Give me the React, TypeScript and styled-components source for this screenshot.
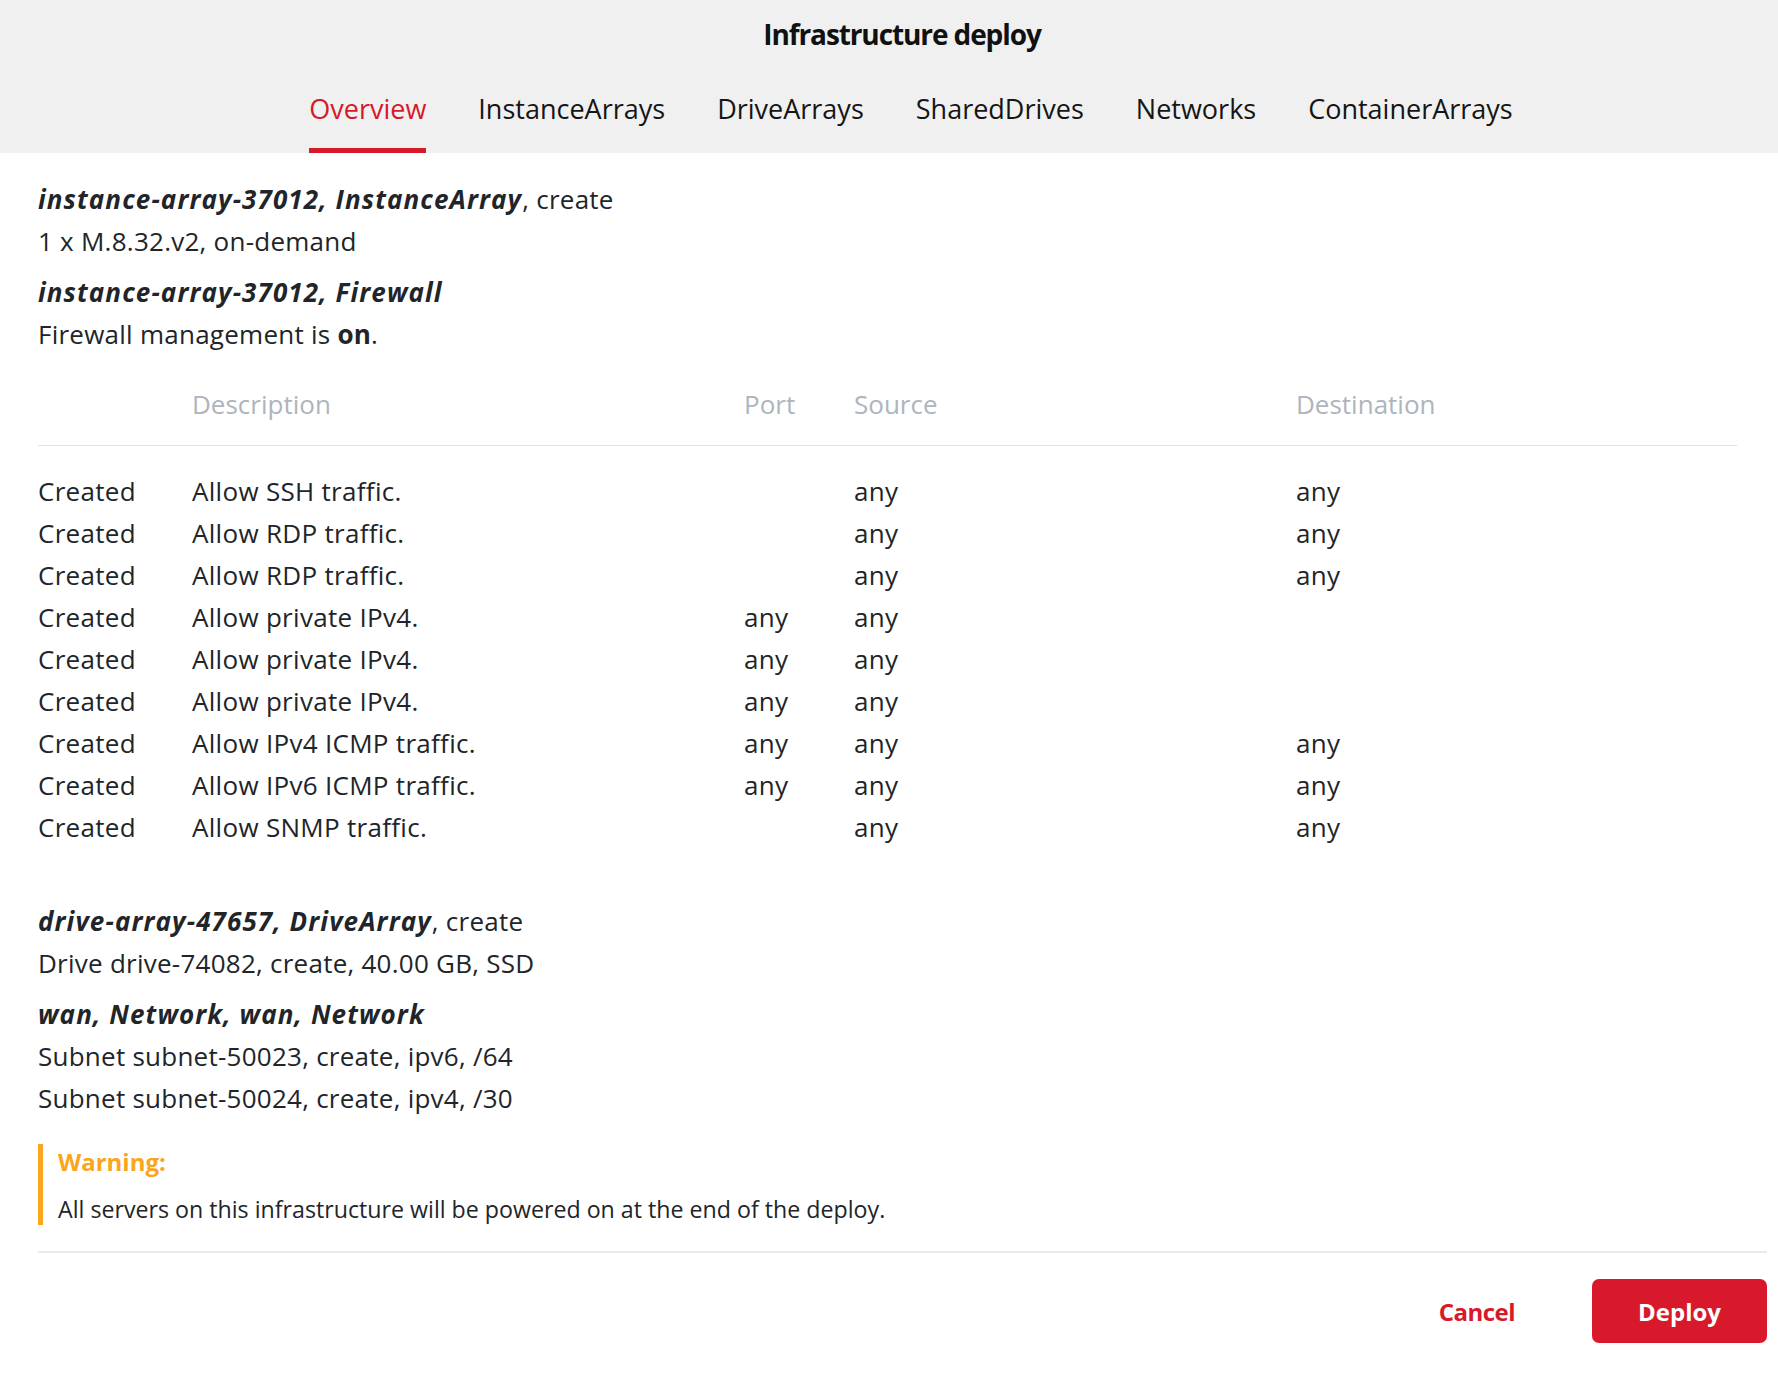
import React from "react";
import styled, { createGlobalStyle } from "styled-components";

const GlobalStyle = createGlobalStyle`
  html, body { margin: 0; padding: 0; background: #ffffff; }
  body { font-family: "Open Sans", "Noto Sans", sans-serif; color: #212529; }
  * { box-sizing: border-box; }
`;

const Modal = styled.div`
  width: 1778px;
  min-height: 1390px;
  background: #ffffff;
  display: flex;
  flex-direction: column;
`;

const Header = styled.header`
  background: #f0f0f0;
  padding: 15px 12px 0 38px;
  display: flex;
  flex-direction: column;
  align-items: center;
`;

const Title = styled.h1`
  margin: 0;
  font-size: 28px;
  line-height: 38px;
  font-weight: 700;
  letter-spacing: -1.1px;
  color: #111111;
`;

const Tabs = styled.nav`
  margin-top: 37px;
  padding-left: 18px;
  display: flex;
  gap: 52px;
`;

const Tab = styled.span<{ $active?: boolean }>`
  font-size: 27px;
  line-height: 38px;
  padding-bottom: 20px;
  color: ${(p) => (p.$active ? "#d51a2a" : "#151515")};
  border-bottom: 5px solid ${(p) => (p.$active ? "#d51a2a" : "transparent")};
  cursor: pointer;
`;

const Body = styled.main`
  padding: 25px 11px 0 38px;
  display: flex;
  flex-direction: column;
`;

const Section = styled.section<{ $top?: number }>`
  margin-top: ${(p) => p.$top ?? 0}px;
`;

const Line = styled.div<{ $gap?: number }>`
  font-size: 26px;
  line-height: 42px;
  letter-spacing: 0.25px;
  margin-top: ${(p) => p.$gap ?? 0}px;
  white-space: nowrap;
`;

const Strong = styled.b`
  font-weight: 700;
  font-style: italic;
  letter-spacing: 1.1px;
`;

const Bold = styled.b`
  font-weight: 700;
`;

const Table = styled.div`
  margin-top: 28px;
  margin-right: 30px;
  display: grid;
  grid-template-columns: 154px 552px 110px 442px 1fr;
  font-size: 26px;
  line-height: 42px;
  letter-spacing: 0.3px;
`;

const HeadCell = styled.div`
  color: #adb5bd;
  letter-spacing: 0;
  padding-bottom: 20px;
  border-bottom: 1px solid #dee2e6;
  margin-bottom: 24px;
`;

const Cell = styled.div`
  color: #212529;
  white-space: nowrap;
`;

const Warning = styled.aside`
  margin-top: 25px;
  border-left: 5px solid #f9a61d;
  padding: 2px 0 0 15px;
  display: flex;
  flex-direction: column;
`;

const WarningTitle = styled.div`
  font-size: 24px;
  line-height: 32px;
  font-weight: 700;
  color: #f9a61d;
`;

const WarningText = styled.div`
  margin-top: 15px;
  font-size: 23.2px;
  line-height: 32px;
  color: #212529;
`;

const Footer = styled.footer`
  margin-top: 26px;
  border-top: 2px solid #e9ecef;
  padding-top: 26px;
  display: flex;
  justify-content: flex-end;
  align-items: center;
`;

const Button = styled.button<{ $primary?: boolean }>`
  height: 64px;
  border: none;
  border-radius: 7px;
  font-family: inherit;
  font-size: 24px;
  font-weight: 700;
  letter-spacing: ${(p) => (p.$primary ? "0" : "-0.5px")};
  cursor: pointer;
  padding: ${(p) => (p.$primary ? "0 46px" : "0 38px")};
  margin-left: ${(p) => (p.$primary ? "39px" : "0")};
  background: ${(p) => (p.$primary ? "#d8192b" : "transparent")};
  color: ${(p) => (p.$primary ? "#ffffff" : "#d8192b")};
`;

const tabs = ["Overview", "InstanceArrays", "DriveArrays", "SharedDrives", "Networks", "ContainerArrays"];

type Rule = { desc: string; port: string; source: string; dest: string };

const rules: Rule[] = [
  { desc: "Allow SSH traffic.", port: "", source: "any", dest: "any" },
  { desc: "Allow RDP traffic.", port: "", source: "any", dest: "any" },
  { desc: "Allow RDP traffic.", port: "", source: "any", dest: "any" },
  { desc: "Allow private IPv4.", port: "any", source: "any", dest: "" },
  { desc: "Allow private IPv4.", port: "any", source: "any", dest: "" },
  { desc: "Allow private IPv4.", port: "any", source: "any", dest: "" },
  { desc: "Allow IPv4 ICMP traffic.", port: "any", source: "any", dest: "any" },
  { desc: "Allow IPv6 ICMP traffic.", port: "any", source: "any", dest: "any" },
  { desc: "Allow SNMP traffic.", port: "", source: "any", dest: "any" },
];

export default function App() {
  return (
    <>
      <GlobalStyle />
      <Modal>
        <Header>
          <Title>Infrastructure deploy</Title>
          <Tabs>
            {tabs.map((t, i) => (
              <Tab key={t} $active={i === 0}>
                {t}
              </Tab>
            ))}
          </Tabs>
        </Header>
        <Body>
          <Section>
            <Line>
              <Strong>instance-array-37012, InstanceArray</Strong>, create
            </Line>
            <Line>1 x M.8.32.v2, on-demand</Line>
            <Line $gap={9}>
              <Strong>instance-array-37012, Firewall</Strong>
            </Line>
            <Line>
              Firewall management is <Bold>on</Bold>.
            </Line>
          </Section>
          <Table>
            <HeadCell />
            <HeadCell>Description</HeadCell>
            <HeadCell>Port</HeadCell>
            <HeadCell>Source</HeadCell>
            <HeadCell>Destination</HeadCell>
            {rules.map((r, i) => (
              <React.Fragment key={i}>
                <Cell>Created</Cell>
                <Cell>{r.desc}</Cell>
                <Cell>{r.port}</Cell>
                <Cell>{r.source}</Cell>
                <Cell>{r.dest}</Cell>
              </React.Fragment>
            ))}
          </Table>
          <Section $top={52}>
            <Line>
              <Strong>drive-array-47657, DriveArray</Strong>, create
            </Line>
            <Line>Drive drive-74082, create, 40.00 GB, SSD</Line>
            <Line $gap={9}>
              <Strong>wan, Network, wan, Network</Strong>
            </Line>
            <Line>Subnet subnet-50023, create, ipv6, /64</Line>
            <Line>Subnet subnet-50024, create, ipv4, /30</Line>
          </Section>
          <Warning>
            <WarningTitle>Warning:</WarningTitle>
            <WarningText>All servers on this infrastructure will be powered on at the end of the deploy.</WarningText>
          </Warning>
          <Footer>
            <Button>Cancel</Button>
            <Button $primary>Deploy</Button>
          </Footer>
        </Body>
      </Modal>
    </>
  );
}
